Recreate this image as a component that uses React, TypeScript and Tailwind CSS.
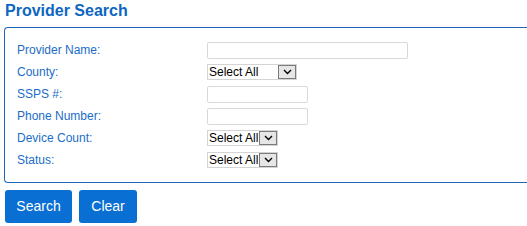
const font = { fontFamily: "'Liberation Sans', Arial, sans-serif" };

const FakeSelect = ({ width }: { width: string }) => (
  <div
    className={`flex h-[16px] items-center justify-between overflow-hidden whitespace-nowrap border border-[#d4d4d4] bg-white pl-[1px] text-[12px] leading-none text-black ${width}`}
  >
    <span>Select All</span>
    <span className="flex h-[14px] w-[18px] shrink-0 items-center justify-center border border-[#7a7a7a] bg-[#e6e6e6]">
      <svg width="9" height="6" viewBox="0 0 9 6">
        <path d="M1 1 L4.5 4.5 L8 1" fill="none" stroke="#000" strokeWidth="1.4" />
      </svg>
    </span>
  </div>
);

const TextBox = ({ width }: { width: string }) => (
  <input
    type="text"
    className={`h-[17px] rounded-[2px] border border-[#d9d9d9] bg-white px-1 text-[12px] outline-none ${width}`}
  />
);

const rows: { label: string; field: React.ReactNode }[] = [
  { label: "Provider Name:", field: <TextBox width="w-[201px]" /> },
  { label: "County:", field: <FakeSelect width="w-[90px]" /> },
  { label: "SSPS #:", field: <TextBox width="w-[101px]" /> },
  { label: "Phone Number:", field: <TextBox width="w-[101px]" /> },
  { label: "Device Count:", field: <FakeSelect width="w-[71px]" /> },
  { label: "Status:", field: <FakeSelect width="w-[71px]" /> },
];

export default function App() {
  return (
    <div className="h-[226px] w-[527px] overflow-hidden bg-white" style={font}>
      <h1 className="pl-[5px] pt-[2px] text-[16px] font-bold leading-[18px] text-[#0d66c2]">
        Provider Search
      </h1>
      <div className="ml-[4px] mt-[7px] rounded-l-[4px] border border-r-0 border-[#1f66b8] pb-[11px] pl-[12px] pt-[11px]">
        {rows.map((row) => (
          <div key={row.label} className="flex h-[22px] items-center">
            <span className="w-[190px] text-[12px] text-[#1a6dc8]">{row.label}</span>
            {row.field}
          </div>
        ))}
      </div>
      <div className="ml-[5px] mt-[7px] flex gap-[7px]">
        <button className="h-[33px] w-[67px] rounded-[3px] bg-[#0a6fd3] text-[14px] text-white">
          Search
        </button>
        <button className="h-[33px] w-[58px] rounded-[3px] bg-[#0a6fd3] text-[14px] text-white">
          Clear
        </button>
      </div>
    </div>
  );
}
